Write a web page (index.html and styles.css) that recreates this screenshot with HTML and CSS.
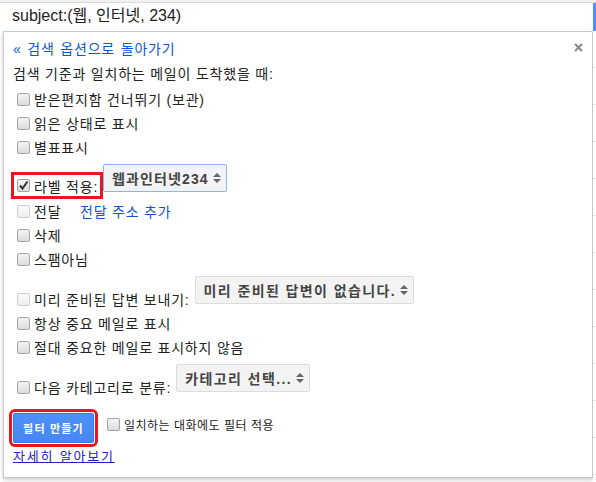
FILE: index.html
```html
<!DOCTYPE html>
<html lang="ko">
<head>
<meta charset="utf-8">
<title>필터</title>
<link rel="stylesheet" href="styles.css">
</head>
<body>
<div class="topline"></div>
<div class="search">
  <div class="search-input">subject:(웹, 인터넷, 234)</div>
  <div class="search-accent"></div>
</div>
<div class="main">
  <div class="panel">
    <div class="head">
      <a class="back" href="#">« 검색 옵션으로 돌아가기</a>
      <svg class="close" width="9" height="9" viewBox="0 0 9 9"><path d="M1 1L8 8M8 1L1 8" stroke="#8a8a8a" stroke-width="2"/></svg>
    </div>
    <div class="crit">검색 기준과 일치하는 메일이 도착했을 때:</div>
    <div class="opt"><span class="cb"></span><span>받은편지함 건너뛰기 (보관)</span></div>
    <div class="opt"><span class="cb"></span><span>읽은 상태로 표시</span></div>
    <div class="opt"><span class="cb"></span><span>별표표시</span></div>
    <div class="selrow">
      <div class="opt hl"><span class="cb checked"><svg width="11" height="11" viewBox="0 0 11 11"><path d="M2 5.5L4.5 8.5L9.5 1.5" fill="none" stroke="#333" stroke-width="2"/></svg></span><span>라벨 적용:</span></div>
      <div class="sel focus"><span>웹과인터넷234</span><span class="arr"><i class="up"></i><i class="dn"></i></span></div>
    </div>
    <div class="opt"><span class="cb dis"></span><span class="w-fwd">전달</span><a class="lnk" href="#">전달 주소 추가</a></div>
    <div class="opt"><span class="cb"></span><span>삭제</span></div>
    <div class="opt"><span class="cb"></span><span>스팸아님</span></div>
    <div class="selrow">
      <div class="opt"><span class="cb dis"></span><span>미리 준비된 답변 보내기:</span></div>
      <div class="sel gap"><span>미리 준비된 답변이 없습니다.</span><span class="arr"><i class="up"></i><i class="dn"></i></span></div>
    </div>
    <div class="opt"><span class="cb"></span><span>항상 중요 메일로 표시</span></div>
    <div class="opt"><span class="cb"></span><span>절대 중요한 메일로 표시하지 않음</span></div>
    <div class="selrow">
      <div class="opt"><span class="cb"></span><span>다음 카테고리로 분류:</span></div>
      <div class="sel gap"><span>카테고리 선택...</span><span class="arr"><i class="up"></i><i class="dn"></i></span></div>
    </div>
    <div class="foot">
      <button class="btn" type="button">필터 만들기</button>
      <div class="also"><span class="cb"></span><span>일치하는 대화에도 필터 적용</span></div>
    </div>
    <a class="learn" href="#">자세히 알아보기</a>
  </div>
  <div class="behind"></div>
</div>
</body>
</html>
```
FILE: styles.css
```css
* { box-sizing: border-box; }
body {
  margin: 0;
  background: #fff;
  font-family: "Liberation Sans", "Noto Sans CJK KR", sans-serif;
  font-size: 13px;
  color: #222;
  width: 596px;
  height: 482px;
  overflow: hidden;
}
.topline {
  height: 3px;
  background: #f1f1f1;
  border-bottom: 1px solid #d9d9d9;
}
.search {
  display: flex;
  height: 28px;
}
.search-input {
  flex: 1;
  padding-left: 12px;
  font-size: 16px;
  line-height: 26px;
  color: #222;
}
.search-accent {
  width: 3px;
  background: #4d90fe;
}
.main {
  display: flex;
  padding-left: 3px;
}
.panel {
  width: 590px;
  height: 447px;
  border: 1px solid #c8c8c8;
  box-shadow: 0 2px 4px rgba(0,0,0,0.2);
  padding: 3px 9px 0 9px;
  display: flex;
  flex-direction: column;
  background: #fff;
  font-size: 14px;
  letter-spacing: 0.8px;
}
.behind {
  width: 3px;
  height: 447px;
  background: repeating-linear-gradient(to bottom, #fff 0, #fff 36px, #e2e2e2 36px, #e2e2e2 37px);
}
.head {
  height: 26px;
  display: flex;
  align-items: center;
  justify-content: space-between;
}
.back {
  color: #15c;
  text-decoration: none;
  word-spacing: 1px;
}
.close { margin-top: -2px; }
.crit {
  height: 26px;
  line-height: 26px;
}
.opt {
  height: 24px;
  display: flex;
  align-items: center;
  padding-left: 4px;
}
.cb {
  width: 13px;
  height: 13px;
  border: 1px solid #a3a3a3;
  border-radius: 2px;
  background: linear-gradient(#f4f4f4, #dcdcdc);
  margin-right: 4px;
  flex: none;
  display: flex;
  align-items: center;
  justify-content: center;
}
.cb.dis {
  border-color: #cfcfcf;
  background: linear-gradient(#fafafa, #eeeeee);
}
.cb.checked svg { display: block; }
.selrow {
  display: flex;
  align-items: flex-end;
  padding-top: 5px;
}
.hl {
  border: 3px solid #e5171f;
  height: 27px;
  padding-left: 3px;
  padding-right: 2px;
  margin-left: -2px;
}
.sel {
  height: 28px;
  margin-bottom: 7px;
  border: 1px solid #dcdcdc;
  border-radius: 2px;
  background: #f3f3f3;
  display: flex;
  align-items: center;
  padding: 0 5px 0 8px;
  font-size: 14px;
  font-weight: bold;
  color: #444;
  letter-spacing: 1.4px;
}
.sel.focus {
  border-color: #8ab4f8;
  background: #f1f3f6;
  letter-spacing: 1.1px;
}
.sel.gap { margin-left: 5px; }
.arr {
  display: flex;
  flex-direction: column;
  gap: 2px;
  margin-left: 4px;
}
.arr i {
  display: block;
  width: 0;
  height: 0;
  border-left: 4px solid transparent;
  border-right: 4px solid transparent;
}
.arr .up { border-bottom: 4px solid #666; }
.arr .dn { border-top: 4px solid #666; }
.w-fwd { width: 46px; }
.lnk { color: #15c; text-decoration: none; }
.foot {
  display: flex;
  align-items: flex-start;
  margin-top: 14px;
}
.btn {
  width: 81px;
  height: 30px;
  border: 1px solid #3079ed;
  border-radius: 2px;
  background: linear-gradient(#4d90fe, #4787ed);
  color: #fff;
  font-family: "Liberation Sans", "Noto Sans CJK KR", sans-serif;
  font-size: 11px;
  font-weight: bold;
  letter-spacing: 1.2px;
  outline: 3px solid #e5171f;
  outline-offset: 1px;
  padding: 0;
}
.also {
  height: 22px;
  display: flex;
  align-items: center;
  margin-left: 13px;
  font-size: 12px;
  letter-spacing: 0.5px;
}
.learn {
  margin-top: 5px;
  line-height: 18px;
  color: #22c;
  text-decoration: underline;
  align-self: flex-start;
  font-size: 13px;
  letter-spacing: 1.8px;
}
```
